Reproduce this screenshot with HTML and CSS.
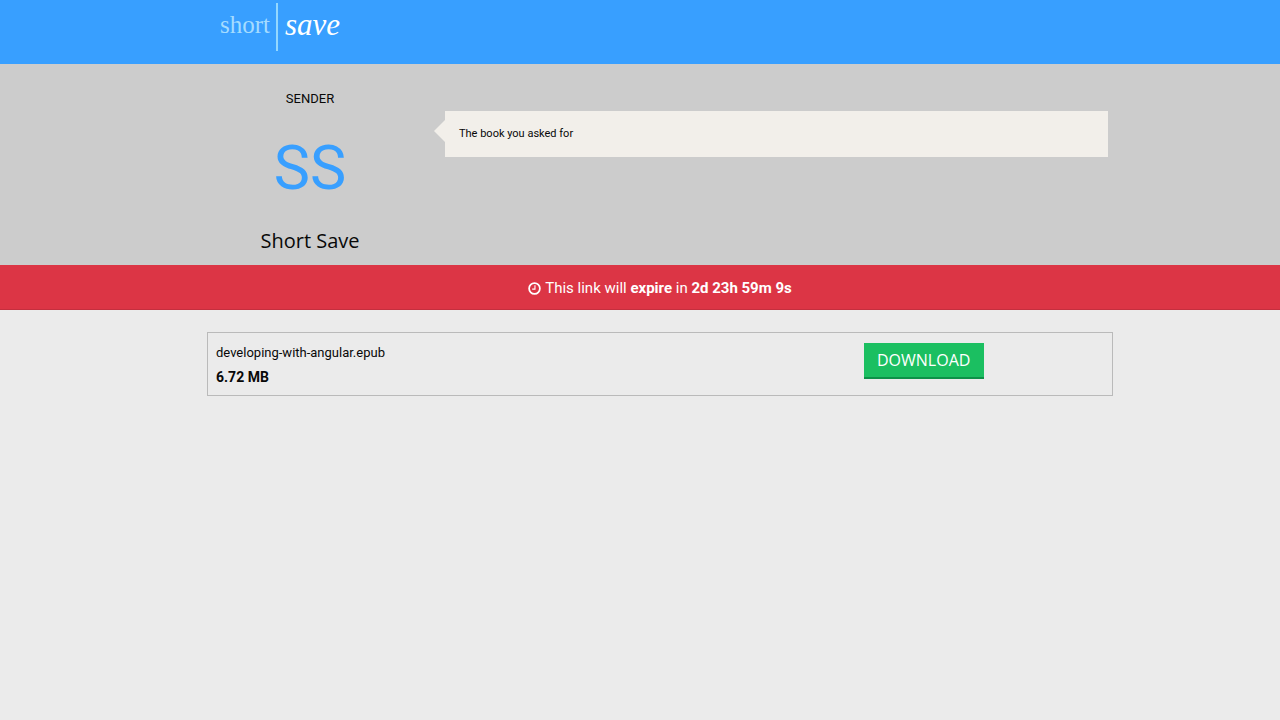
FILE: index.html
```html
<!DOCTYPE html>
<html lang="en">
<head>
<meta charset="utf-8">
<title>Short Save</title>
<link rel="stylesheet" href="styles.css">
</head>
<body>
<header class="topbar">
  <div class="container">
    <a class="logo" href="#"><span class="logo-short">short</span><span class="logo-save">save</span></a>
  </div>
</header>
<main>
  <section class="message">
    <div class="container message-grid">
      <div class="sender">
        <p class="sender-label">SENDER</p>
        <div class="initials">SS</div>
        <h1 class="sender-name">Short Save</h1>
      </div>
      <p class="bubble">The book you asked for</p>
    </div>
  </section>
  <p class="expiry">
    <svg class="clock" viewBox="0 0 14 14" fill="none" stroke="currentColor" aria-hidden="true"><circle cx="7" cy="7" r="5.8" stroke-width="1.9"/><path d="M7.5 3.5v4.2H4.5" stroke-width="1.2"/></svg>
    <span>This link will <strong>expire</strong> in <strong>2d 23h 59m 9s</strong></span>
  </p>
  <section class="files">
    <article class="container file">
      <div class="file-info">
        <p class="file-name">developing-with-angular.epub</p>
        <p class="file-size">6.72 MB</p>
      </div>
      <button class="download" type="button">DOWNLOAD</button>
    </article>
  </section>
</main>
</body>
</html>
```
FILE: styles.css
```css
* {
  box-sizing: border-box;
}

body {
  margin: 0;
  background: #ebebeb;
  color: #080808;
  font-family: Roboto, sans-serif;
}

p,
h1 {
  margin: 0;
}

.container {
  width: 100%;
  max-width: 906px;
  margin: 0 auto;
}

.topbar,
.message,
.expiry,
.files {
  padding-left: 40px;
}

.topbar {
  height: 64px;
  padding-top: 3px;
  background: #389fff;
}

.logo {
  display: inline-flex;
  align-items: stretch;
  height: 48px;
  margin-left: 13px;
  color: #fff;
  text-decoration: none;
  line-height: 44px;
}

.logo-short {
  padding-right: 6px;
  border-right: 2px solid #94d8ff;
  color: #a5dcff;
  font-family: "Liberation Serif", serif;
  font-size: 25px;
}

.logo-save {
  padding-left: 7px;
  font-family: "Liberation Serif", serif;
  font-size: 31px;
  font-style: italic;
}

.message {
  background: #ccc;
}

.message-grid {
  display: grid;
  grid-template-columns: 206px 1fr;
  column-gap: 32px;
  align-items: start;
  min-height: 201px;
  padding: 25px 5px 10px 0;
}

.sender {
  text-align: center;
}

.sender-label {
  font-size: 13px;
  line-height: 20px;
}

.initials {
  margin-top: 23px;
  color: #389fff;
  font-size: 61px;
  line-height: 72px;
}

.sender-name {
  margin-top: 25px;
  font-family: "Open Sans", sans-serif;
  font-size: 20px;
  font-weight: 400;
  line-height: 24px;
}

.bubble {
  position: relative;
  margin-top: 22px;
  padding: 12px 14px;
  background: #f2efea;
  font-size: 11px;
  line-height: 22px;
}

.bubble::before {
  content: "";
  position: absolute;
  top: 9px;
  right: 100%;
  border: 11px solid transparent;
  border-left-width: 0;
  border-right-color: #f2efea;
}

.expiry {
  display: flex;
  align-items: center;
  justify-content: center;
  gap: 4px;
  min-height: 45px;
  padding-top: 2px;
  border-bottom: 1px solid #c42f3e;
  background: #dc3545;
  color: #fff;
  font-size: 15px;
  line-height: 22px;
}

.clock {
  width: 13px;
  height: 13px;
}

.file {
  display: grid;
  grid-template-columns: 7fr 5fr;
  align-items: start;
  margin-top: 22px;
  padding: 8px 0 6px;
  border: 1px solid #bababa;
}

.file-info {
  padding-left: 8px;
  line-height: 24px;
}

.file-name {
  font-size: 13px;
}

.file-size {
  font-size: 14px;
  font-weight: 700;
}

.download {
  justify-self: center;
  width: 120px;
  height: 36px;
  margin-top: 2px;
  padding: 0;
  border: 0;
  border-bottom: 2px solid #0d9148;
  background: #1bbf61;
  color: #fff;
  font-family: "Open Sans", sans-serif;
  font-size: 16px;
  cursor: pointer;
}
```
